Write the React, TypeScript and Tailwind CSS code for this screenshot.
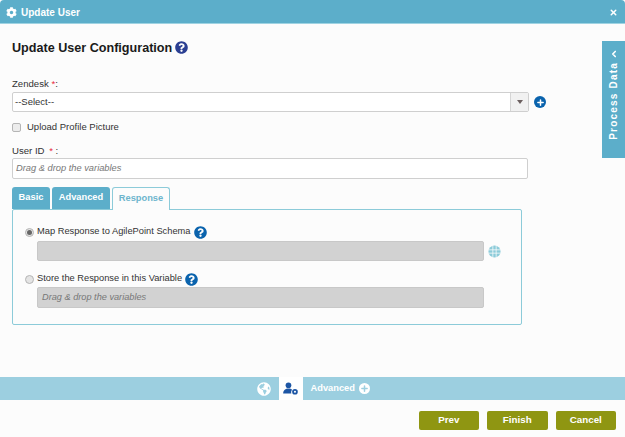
import { X, ChevronLeft, Plus } from "lucide-react"
import { FaCog, FaGlobeAmericas, FaQuestionCircle } from "react-icons/fa"

function Radio({ checked }: { checked?: boolean }) {
  return (
    <span className="flex h-[9px] w-[9px] shrink-0 items-center justify-center rounded-full border border-[#b5b5b5] bg-[#e4e4e4]">
      {checked && <span className="h-[5px] w-[5px] rounded-full bg-[#666]" />}
    </span>
  )
}

export default function App() {
  return (
    <div className="relative flex h-[437px] w-[625px] flex-col overflow-hidden bg-[#fcfcfc] font-['Liberation_Sans',Arial,sans-serif] text-[#333]">
      <header className="flex h-[24px] shrink-0 items-center justify-between rounded-t-[4px] border-b border-[#9fd3e2] bg-[#5caeca] pl-[6px] pr-[7px] pt-px text-white">
        <div className="flex items-center gap-[4px]">
          <FaCog className="h-[11px] w-[11px]" />
          <span className="text-[10px] font-bold">Update User</span>
        </div>
        <X className="h-[9px] w-[9px]" strokeWidth={4} />
      </header>

      <main className="flex min-h-0 flex-1 flex-col px-[12px] pt-[16px]">
        <div className="flex h-[17px] items-center gap-[3px]">
          <h1 className="text-[12.6px] font-bold leading-none text-[#1a1a1a]">Update User Configuration</h1>
          <FaQuestionCircle className="mb-[2px] h-[13px] w-[13px] text-[#2b3f92]" />
        </div>

        <label className="mt-[20px] h-[14px] text-[9.6px] leading-[14px]">
          Zendesk <span className="text-[#e8283c]">*</span>:
        </label>
        <div className="mt-[1px] flex items-center gap-[5px]">
          <div className="flex h-[20px] w-[517px] items-center justify-between rounded-[2px] border border-[#cfcfcf] bg-white">
            <span className="pl-[2px] text-[9.5px]">--Select--</span>
            <span className="flex h-full w-[18px] items-center justify-center border-l border-[#d5d5d5] bg-[#f1f1f1]">
              <span className="h-0 w-0 border-x-[3px] border-t-[4px] border-x-transparent border-t-[#6b5f5f]" />
            </span>
          </div>
          <span className="flex h-[12px] w-[12px] items-center justify-center rounded-full bg-[#0a63ad] text-white">
            <Plus className="h-[9px] w-[9px]" strokeWidth={4} />
          </span>
        </div>

        <div className="mt-[10px] flex h-[10px] items-center gap-[6px]">
          <span className="h-[9px] w-[9px] rounded-[2px] border border-[#b5b5b5] bg-[#ececec]" />
          <span className="text-[9.5px]">Upload Profile Picture</span>
        </div>

        <label className="mt-[12px] h-[14px] text-[9.6px] leading-[14px]">
          User ID <span className="ml-[2px] text-[#e8283c]">*</span> :
        </label>
        <div className="flex h-[21px] w-[516px] items-center rounded-[2px] border border-[#cfcfcf] bg-white pl-[3px] text-[9.3px] italic text-[#777]">
          Drag &amp; drop the variables
        </div>

        <div className="mt-[8px] flex h-[22px] items-end gap-[2px] text-[9.3px] font-bold">
          <div className="flex h-[22px] w-[38px] items-center justify-center rounded-t-[3px] bg-[#5caeca] text-white">Basic</div>
          <div className="flex h-[22px] w-[58px] items-center justify-center rounded-t-[3px] bg-[#5caeca] text-white">Advanced</div>
          <div className="z-10 -mb-[1px] flex h-[23px] w-[58px] items-center justify-center rounded-t-[3px] border border-b-0 border-[#8ccbd9] bg-[#fcfcfc] text-[#6db5cd]">Response</div>
        </div>
        <section className="flex h-[116px] w-[510px] flex-col rounded-[2px] border border-[#8ccbd9] pl-[12px] pt-[15px]">
          <div className="flex h-[14px] items-center gap-[3px]">
            <Radio checked />
            <span className="text-[9.3px]">Map Response to AgilePoint Schema</span>
            <FaQuestionCircle className="h-[13px] w-[13px] text-[#0a63ad]" />
          </div>
          <div className="mt-[2px] flex items-center gap-[4px] pl-[12px]">
            <div className="h-[20px] w-[447px] rounded-[2px] border border-[#c8c8c8] bg-[#d2d2d2]" />
            <svg viewBox="0 0 14 14" className="h-[13px] w-[13px] text-[#8ccbd9]">
              <circle cx="7" cy="7" r="6.5" fill="currentColor" />
              <path d="M1 5.200h12M1 8.800h12M5.200 1v12M8.800 1v12" stroke="#fcfcfc" strokeWidth="0.8" fill="none" />
            </svg>
          </div>
          <div className="mt-[11px] flex h-[14px] items-center gap-[3px]">
            <Radio />
            <span className="text-[9.3px]">Store the Response in this Variable</span>
            <FaQuestionCircle className="h-[13px] w-[13px] text-[#0a63ad]" />
          </div>
          <div className="ml-[12px] mt-[1px] flex h-[21px] w-[447px] items-center rounded-[2px] border border-[#c8c8c8] bg-[#d2d2d2] pl-[4px] text-[9.2px] italic text-[#777]">
            Drag &amp; drop the variables
          </div>
        </section>
      </main>

      <nav className="flex h-[23px] shrink-0 items-stretch justify-center bg-[#9ccfe0] pl-[22px] text-white">
        <div className="flex w-[30px] items-center justify-center">
          <FaGlobeAmericas className="h-[14px] w-[14px]" />
        </div>
        <div className="flex w-[24px] items-center justify-center bg-white">
          <svg viewBox="0 0 20 16" className="h-[13px] w-[17px] text-[#1d56a5]">
            <circle cx="7.500" cy="4" r="3.500" fill="currentColor" />
            <path d="M1 14c0-4 3-6 6.500-6 2 0 3.500.6 4.500 1.500-1 1-1.500 2.500-1 4.500z" fill="currentColor" />
            <circle cx="15.500" cy="12" r="3.500" fill="currentColor" />
            <circle cx="15.500" cy="12" r="1.300" fill="#fff" />
          </svg>
        </div>
        <div className="flex w-[96px] items-center gap-[4px] pl-[8px] text-[9.3px] font-bold">
          Advanced
          <span className="flex h-[11px] w-[11px] items-center justify-center rounded-full bg-white text-[#9ccfe0]">
            <Plus className="h-[9px] w-[9px]" strokeWidth={4} />
          </span>
        </div>
      </nav>

      <footer className="flex h-[37px] shrink-0 items-start justify-end gap-[8px] pr-[9px] pt-[11px] text-[9.8px] font-bold text-white">
        <button className="h-[19px] w-[60.500px] rounded-[2px] bg-[#8f9612]">Prev</button>
        <button className="h-[19px] w-[60.500px] rounded-[2px] bg-[#8f9612]">Finish</button>
        <button className="h-[19px] w-[60.500px] rounded-[2px] bg-[#8f9612]">Cancel</button>
      </footer>

      <aside className="absolute right-0 top-[41px] flex h-[117px] w-[23px] flex-col items-center bg-[#5caeca] pt-[8px] text-white">
        <ChevronLeft className="h-[10px] w-[10px]" strokeWidth={4} />
        <span className="mt-[3px] rotate-180 text-[10px] font-bold tracking-[1.2px] [writing-mode:vertical-rl]">Process Data</span>
      </aside>
    </div>
  )
}
